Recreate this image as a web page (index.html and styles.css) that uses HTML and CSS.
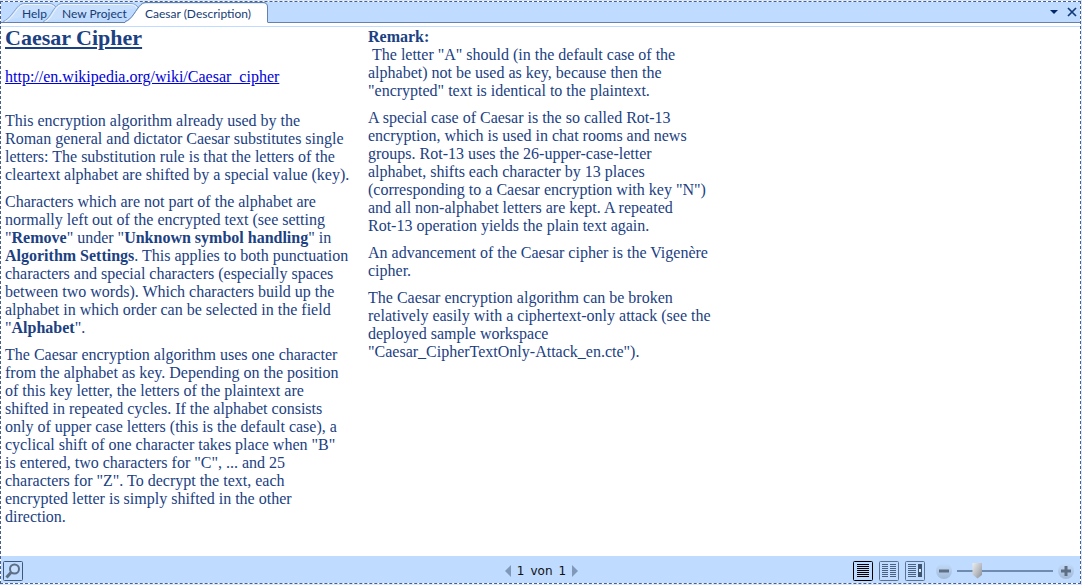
FILE: index.html
```html
<!DOCTYPE html>
<html lang="en">
<head>
<meta charset="utf-8">
<title>Caesar (Description)</title>
<link rel="stylesheet" href="styles.css">
</head>
<body>
<div class="window">
  <header class="tabbar">
    <div class="tabs" role="tablist">
      <button class="tab tab-help" role="tab" type="button">
        <svg class="tab-shape" viewBox="0 0 54 20" preserveAspectRatio="none" aria-hidden="true"><path class="edge" d="M0 19.5C6 18 12 7 16 3.5C18 1.7 20 1.5 22 1.5H46Q51 1.500 53.500 6"/><path class="shine" d="M2 19.500C8 18 13 8 17 4.500Q19 2.500 22 2.500H46Q50 2.500 52 6"/></svg>
        <span>Help</span>
      </button>
      <button class="tab tab-project" role="tab" type="button">
        <svg class="tab-shape" viewBox="0 0 96 20" preserveAspectRatio="none" aria-hidden="true"><path class="edge" d="M0 19.5C6 18 9 8 14 3.500C16 1.700 18 1.500 20 1.500H88Q93 1.500 95.500 6"/><path class="shine" d="M2 19.500C8 18 11 8 15 4.500Q17 2.500 20 2.500H88Q92 2.500 94 6"/></svg>
        <span>New Project</span>
      </button>
      <button class="tab tab-active" role="tab" type="button" aria-selected="true">
        <svg class="tab-shape" viewBox="0 0 142 21" preserveAspectRatio="none" aria-hidden="true"><path class="fill" d="M-1 20.500C6 19 10 8 15 3.500C17 1.500 19 1.500 22 1.500H138Q141.500 1.500 141.500 5V21H-1Z"/><path class="edge-on" d="M-1 19.500C6 18 10 7 15 2.500C17 .5 19 .5 22 .5H137Q141.500 .5 141.500 5V20"/></svg>
        <span>Caesar (Description)</span>
      </button>
    </div>
    <div class="actions">
      <button type="button" aria-label="Tab list"><svg width="10" height="12" viewBox="0 0 10 12"><path d="M1 4H9L5 8Z" fill="#00286a"/></svg></button>
      <button type="button" aria-label="Close"><svg width="10" height="12" viewBox="0 0 10 12"><path d="M1 2L9 10M9 2L1 10" stroke="#123a78" stroke-width="1.700"/></svg></button>
    </div>
  </header>

  <main class="document">
    <section class="column">
      <h1>Caesar Cipher</h1>
      <p class="link"><a href="http://en.wikipedia.org/wiki/Caesar_cipher">http://en.wikipedia.org/wiki/Caesar_cipher</a></p>
      <p>This encryption algorithm already used by the Roman general and dictator Caesar substitutes single letters: The substitution rule is that the letters of the cleartext alphabet are shifted by a special value (key).</p>
      <p>Characters which are not part of the alphabet are normally left out of the encrypted text (see setting "<b>Remove</b>" under "<b>Unknown symbol handling</b>" in <b>Algorithm Settings</b>. This applies to both punctuation characters and special characters (especially spaces between two words). Which characters build up the alphabet in which order can be selected in the field "<b>Alphabet</b>".</p>
      <p>The Caesar encryption algorithm uses one character from the alphabet as key. Depending on the position of this key letter, the letters of the plaintext are shifted in repeated cycles. If the alphabet consists only of upper case letters (this is the default case), a cyclical shift of one character takes place when "B" is&nbsp;entered, two characters for "C", ... and 25 characters for "Z". To decrypt the text, each encrypted letter is simply shifted in the other direction.</p>
    </section>
    <section class="column">
      <p><b>Remark:</b><br>&nbsp;The letter "A" should (in the default case of the alphabet) not be used as key, because then the "encrypted" text is identical to the plaintext.</p>
      <p>A special case of Caesar is the so called Rot-13 encryption, which is used in chat rooms and news groups. Rot-13 uses the 26-upper-case-letter alphabet, shifts each character by 13 places (corresponding to a Caesar encryption with key "N") and all non-alphabet letters are kept. A repeated <span class="nowrap">Rot-13</span> operation yields the plain text again.</p>
      <p>An advancement of the Caesar cipher is the Vigenère cipher.</p>
      <p>The Caesar encryption algorithm can be broken relatively easily with a ciphertext-only attack (see the deployed sample workspace <span class="nowrap">"Caesar_CipherTextOnly-Attack_en.cte").</span></p>
    </section>
  </main>

  <footer class="toolbar">
    <div class="side">
      <button class="box" type="button" aria-label="Find"><svg width="20" height="20" viewBox="0 0 20 20"><rect x=".5" y=".5" width="19" height="19" rx="1" fill="none" stroke="#3f5878"/><circle cx="11.500" cy="8" r="4.500" fill="#c9e0ff" stroke="#5d6f85" stroke-width="2"/><path d="M8 11.500L3.500 16.500" stroke="#5d6f85" stroke-width="3"/></svg></button>
    </div>
    <nav class="pager" aria-label="Pages">
      <button type="button" aria-label="Previous page"><svg width="6" height="12" viewBox="0 0 6 12"><path d="M6 0V12L0 6Z" fill="#8199b8"/></svg></button>
      <span class="count"><span>1</span><span>von</span><span>1</span></span>
      <button type="button" aria-label="Next page"><svg width="6" height="12" viewBox="0 0 6 12"><path d="M0 0V12L6 6Z" fill="#8199b8"/></svg></button>
    </nav>
    <div class="side side-right">
      <div class="views">
        <button type="button" aria-label="Single page"><svg width="20" height="20" viewBox="0 0 20 20"><rect x=".5" y=".5" width="19" height="19" rx="1" fill="none" stroke="#000"/><path d="M4 3.500H16M4 5.500H16M4 7.500H16M4 9.500H16M4 11.500H16M4 13.500H16M4 15.500H16" stroke="#000"/></svg></button>
        <button type="button" aria-label="Two pages"><svg width="20" height="20" viewBox="0 0 20 20"><rect x=".5" y=".5" width="19" height="19" rx="1" fill="none" stroke="#5c7290"/><path d="M3 3.500H9M3 5.500H9M3 7.500H9M3 9.500H9M3 11.500H9M3 13.500H9M3 15.500H9M11 3.500H17M11 5.500H17M11 7.500H17M11 9.500H17M11 11.500H17M11 13.500H17M11 15.500H17" stroke="#4a6080"/></svg></button>
        <button type="button" aria-label="Scroll view"><svg width="20" height="20" viewBox="0 0 20 20"><rect x=".5" y=".5" width="19" height="19" rx="1" fill="none" stroke="#5c7290"/><path d="M3 3.500H11M3 5.500H11M3 7.500H11M3 9.500H11M3 11.500H11M3 13.500H11M3 15.500H11" stroke="#4a6080"/><path d="M13 3H17V16H13Z" fill="#3f546e"/><path d="M14 8H16V11H14Z" fill="#d5e7ff"/></svg></button>
      </div>
      <button class="round" type="button" aria-label="Zoom out"><svg width="16" height="16" viewBox="0 0 16 16"><path d="M3 8H13" stroke="#5e6f84" stroke-width="3"/></svg></button>
      <input class="zoom" type="range" min="0" max="100" value="18" aria-label="Zoom">
      <button class="round" type="button" aria-label="Zoom in"><svg width="16" height="16" viewBox="0 0 16 16"><path d="M3 8H13M8 3V13" stroke="#5e6f84" stroke-width="3"/></svg></button>
    </div>
  </footer>
</div>
</body>
</html>
```
FILE: styles.css
```css
* {
  box-sizing: border-box;
}

body {
  margin: 0;
  padding: 1px 1px 1px 0;
  min-height: 100vh;
  display: flex;
  background: #d9e7fa;
}

button {
  margin: 0;
  padding: 0;
  border: 0;
  background: none;
  color: inherit;
  font: inherit;
}

svg {
  display: block;
}

.window {
  flex: 1;
  display: flex;
  flex-direction: column;
  border: 1px dashed #49608a;
  background: #fff;
}

.tabbar {
  display: flex;
  justify-content: space-between;
  height: 21px;
  background: #bfdbff;
  border-bottom: 1px solid #6480ac;
  color: #173c75;
  font: 12px/20px Lato, "Noto Sans", sans-serif;
}

.tabs {
  display: flex;
  padding-left: 2px;
}

.tab {
  position: relative;
  height: 20px;
  padding-top: 2px;
  text-align: left;
  white-space: nowrap;
}

.tab span {
  position: relative;
}

.tab-shape {
  position: absolute;
  inset: 0;
  width: 100%;
  height: 100%;
  overflow: visible;
}

.tab-help {
  width: 54px;
  padding-left: 19px;
}

.tab-project {
  width: 96px;
  margin-left: -14px;
  padding-left: 19px;
}

.tab-active {
  width: 142px;
  height: 21px;
  margin-left: -13px;
  padding-left: 19px;
}

.edge {
  fill: #c9e0fd;
  stroke: #86a3ce;
}

.shine {
  fill: none;
  stroke: #eef6ff;
}

.fill {
  fill: #fff;
}

.edge-on {
  fill: none;
  stroke: #6480ac;
}

.actions {
  display: flex;
  align-items: center;
  gap: 8px;
  padding-right: 3px;
}

.document {
  flex: 1;
  display: flex;
  gap: 18px;
  margin-top: 3px;
  padding: 1px 4px 8px;
  border-top: 1px solid #bfdbff;
  color: #1b4182;
  font: 16px/18px "Liberation Serif", "Times New Roman", serif;
}

.column {
  flex: 0 1 345px;
}

h1 {
  margin: 0 0 20px;
  font-size: 22px;
  line-height: 20px;
  text-decoration: underline;
}

p {
  margin: 0 0 9px;
}

.link {
  margin-bottom: 26px;
}

a {
  color: #0000d8;
}

.nowrap {
  white-space: nowrap;
}

.toolbar {
  display: flex;
  align-items: center;
  height: 27px;
  padding: 2px 6px 0 2px;
  background: #bfdbff;
}

.side {
  flex: 1;
  display: flex;
  align-items: center;
}

.side-right {
  justify-content: flex-end;
  gap: 5px;
}

.views {
  display: flex;
  gap: 6px;
  margin-right: 6px;
}

.pager {
  display: flex;
  align-items: center;
  gap: 6px;
  margin-left: 6px;
  color: #111;
  font: 12px/16px "DejaVu Sans", Verdana, sans-serif;
}

.count {
  display: flex;
  gap: 6px;
}

.round {
  border-radius: 50%;
  background: linear-gradient(#c2dcfb, #a2bad8);
}

.zoom {
  width: 96px;
  height: 16px;
  margin: 0;
  appearance: none;
  background: linear-gradient(#6f8baf, #6f8baf) center / 100% 2px no-repeat;
}

.zoom::-webkit-slider-thumb {
  appearance: none;
  width: 10px;
  height: 16px;
  background: linear-gradient(120deg, #f0f0f0, #b4b8bd 60%, #858b94);
  clip-path: polygon(0 0, 100% 0, 100% 75%, 50% 100%, 0 75%);
}
```
